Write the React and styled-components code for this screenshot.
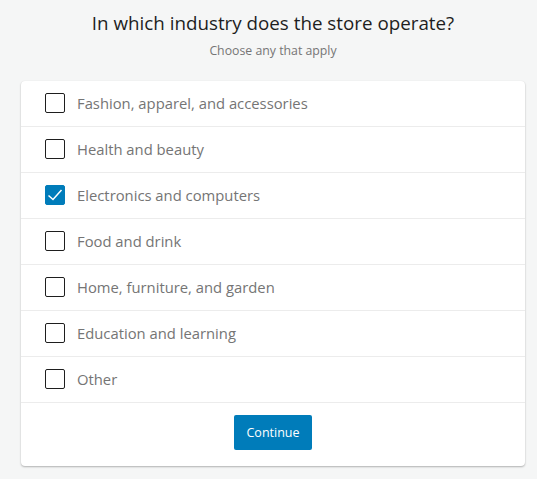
import React, { useState } from 'react'
import styled, { createGlobalStyle } from 'styled-components'

const GlobalStyle = createGlobalStyle`
  body {
    margin: 0;
    background: #f5f6f6;
    font-family: "Open Sans", "Noto Sans", sans-serif;
  }
`

const Page = styled.main`
  display: flex;
  flex-direction: column;
  align-items: center;
  padding: 9px 12px 12px 21px;
`

const Title = styled.h1`
  margin: 0;
  font-size: 18.8px;
  font-weight: 400;
  line-height: 28px;
  color: #1e1e1e;
`

const Subtitle = styled.p`
  margin: 5px 0 0;
  font-size: 12.3px;
  line-height: 18px;
  color: #757575;
`

const Card = styled.section`
  margin-top: 21px;
  width: 504px;
  align-self: flex-start;
  background: #fff;
  border-radius: 4px;
  box-shadow: 0 1px 2px rgba(0, 0, 0, 0.28), 0 0 1px rgba(0, 0, 0, 0.06);
`

const Row = styled.label`
  display: flex;
  align-items: center;
  gap: 12px;
  height: 45px;
  box-sizing: border-box;
  padding: 0 24px 2px;
  border-bottom: 1px solid #ececec;
  height: 46px;
  cursor: pointer;
`

const Box = styled.span`
  flex: none;
  display: flex;
  align-items: center;
  justify-content: center;
  width: 20px;
  height: 20px;
  box-sizing: border-box;
  border-radius: 2px;
  border: 1.5px solid ${p => (p.checked ? '#007cba' : '#1e1e1e')};
  background: ${p => (p.checked ? '#007cba' : '#fff')};
`

const Label = styled.span`
  font-size: 14.8px;
  color: #757575;
`

const Footer = styled.div`
  display: flex;
  justify-content: center;
  padding: 12px 0 16px;
`

const Button = styled.button`
  height: 35px;
  padding: 0 12px;
  border: none;
  border-radius: 2px;
  background: #007cba;
  color: #fff;
  font-family: inherit;
  font-size: 12.5px;
  cursor: pointer;
`

const options = [
  'Fashion, apparel, and accessories',
  'Health and beauty',
  'Electronics and computers',
  'Food and drink',
  'Home, furniture, and garden',
  'Education and learning',
  'Other',
]

export default function App() {
  const [selected, setSelected] = useState(['Electronics and computers'])
  const toggle = o =>
    setSelected(prev =>
      prev.includes(o) ? prev.filter(x => x !== o) : [...prev, o]
    )
  return (
    <Page>
      <GlobalStyle />
      <Title>In which industry does the store operate?</Title>
      <Subtitle>Choose any that apply</Subtitle>
      <Card>
        {options.map(o => {
          const checked = selected.includes(o)
          return (
            <Row key={o} onClick={() => toggle(o)}>
              <Box checked={checked}>
                {checked && (
                  <svg width="18" height="18" viewBox="0 0 18 18">
                    <path
                      d="M2.5 9.5 L7 13.5 L15.5 4"
                      fill="none"
                      stroke="#fff"
                      strokeWidth="1.5"
                    />
                  </svg>
                )}
              </Box>
              <Label>{o}</Label>
            </Row>
          )
        })}
        <Footer>
          <Button>Continue</Button>
        </Footer>
      </Card>
    </Page>
  )
}
